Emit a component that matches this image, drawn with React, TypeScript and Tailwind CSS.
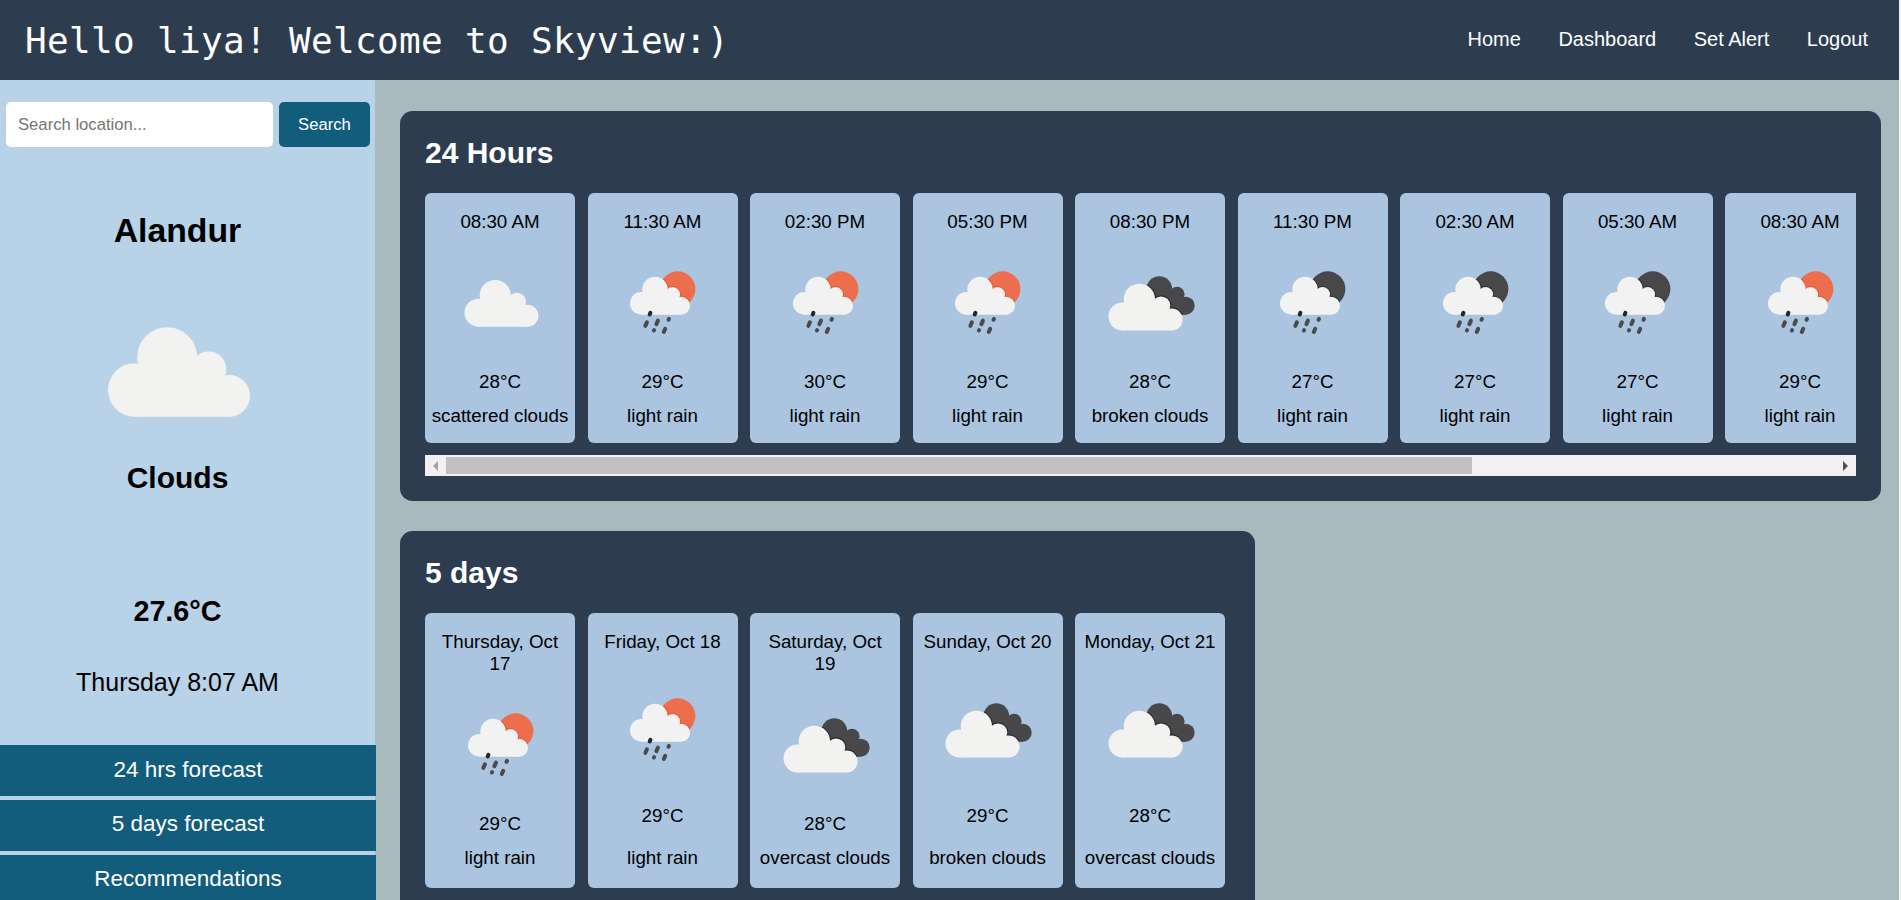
import React from "react";

type IconKind = "cloud" | "dayRain" | "nightRain" | "broken";

interface Forecast {
  label: string;
  icon: IconKind;
  temp: string;
  text: string;
}

const hours: Forecast[] = [
  { label: "08:30 AM", icon: "cloud", temp: "28°C", text: "scattered clouds" },
  { label: "11:30 AM", icon: "dayRain", temp: "29°C", text: "light rain" },
  { label: "02:30 PM", icon: "dayRain", temp: "30°C", text: "light rain" },
  { label: "05:30 PM", icon: "dayRain", temp: "29°C", text: "light rain" },
  { label: "08:30 PM", icon: "broken", temp: "28°C", text: "broken clouds" },
  { label: "11:30 PM", icon: "nightRain", temp: "27°C", text: "light rain" },
  { label: "02:30 AM", icon: "nightRain", temp: "27°C", text: "light rain" },
  { label: "05:30 AM", icon: "nightRain", temp: "27°C", text: "light rain" },
  { label: "08:30 AM", icon: "dayRain", temp: "29°C", text: "light rain" },
];

const days: Forecast[] = [
  { label: "Thursday, Oct 17", icon: "dayRain", temp: "29°C", text: "light rain" },
  { label: "Friday, Oct 18", icon: "dayRain", temp: "29°C", text: "light rain" },
  { label: "Saturday, Oct 19", icon: "broken", temp: "28°C", text: "overcast clouds" },
  { label: "Sunday, Oct 20", icon: "broken", temp: "29°C", text: "broken clouds" },
  { label: "Monday, Oct 21", icon: "broken", temp: "28°C", text: "overcast clouds" },
];

// Cloud silhouette, 426 x 269 units with its origin at the top left corner.
function CloudShape({ transform, fill, stroke }: { transform?: string; fill: string; stroke?: string }) {
  return (
    <g transform={transform} fill={fill} stroke={stroke} strokeWidth={stroke ? 14 : 0}>
      <circle cx="80.5" cy="188.5" r="80.5" />
      <circle cx="177.5" cy="90" r="90" />
      <circle cx="302" cy="126" r="53" />
      <circle cx="363" cy="206" r="63" />
      <path d="M80 269V189L177 90L302 126L363 206V269Z" />
    </g>
  );
}

function Rain({ disc, edge, id }: { disc: string; edge: string; id: string }) {
  return (
    <>
      <clipPath id={id}>
        <circle cx="77.7" cy="48" r="17.7" />
      </clipPath>
      <circle cx="77.7" cy="48" r="17.7" fill={disc} />
      <g clipPath={`url(#${id})`}>
        <CloudShape transform="translate(30 35.7) scale(.141)" fill={edge} stroke={edge} />
      </g>
      <CloudShape transform="translate(30 35.7) scale(.141)" fill="#f2f2f2" />
      <g stroke="#4a4a4c" strokeWidth="4" strokeLinecap="round">
        <path d="M50.4 71.9L49.7 73.5" stroke="#262626" />
        <path d="M46.9 81.4L45.4 84.8" />
        <path d="M57.9 79.7L56.4 83.1" />
        <path d="M69 77.9L68.5 78.8" />
        <path d="M54.1 89.2L53.9 89.5" />
        <path d="M65.2 87.8L63.8 91" />
      </g>
    </>
  );
}

function BrokenClouds() {
  return (
    <>
      <clipPath id="back-cloud" transform="translate(46 35.3) scale(.1425)">
        <circle cx="177.5" cy="90" r="90" />
        <circle cx="302" cy="126" r="53" />
        <circle cx="363" cy="206" r="63" />
        <path d="M80 269V189L177 90L302 126L363 206V269Z" />
      </clipPath>
      <CloudShape transform="translate(46 35.3) scale(.1425)" fill="#48484a" />
      <g clipPath="url(#back-cloud)">
        <CloudShape transform="translate(20.5 42.7) scale(.174)" fill="#2c2c2e" stroke="#2c2c2e" />
      </g>
      <CloudShape transform="translate(20.5 42.7) scale(.174)" fill="#f2f2f0" />
    </>
  );
}

function WeatherIcon({ kind }: { kind: IconKind }) {
  return (
    <svg viewBox="0 0 125 125" className="h-[125px] w-[125px] shrink-0">
      {kind === "cloud" && <CloudShape transform="translate(26.5 39) scale(.1735)" fill="#f2f2f0" />}
      {kind === "dayRain" && <Rain disc="#ed6e4c" edge="#e8542f" id="sun-disc" />}
      {kind === "nightRain" && <Rain disc="#48484a" edge="#2f2f31" id="moon-disc" />}
      {kind === "broken" && <BrokenClouds />}
    </svg>
  );
}

function Card({ item, className }: { item: Forecast; className: string }) {
  return (
    <div
      className={`flex w-[150px] shrink-0 flex-col items-center justify-between rounded-[6px] bg-[#abc5e0] px-[6px] pt-[18px] text-center text-[18.75px] leading-[22px] text-black ${className}`}
    >
      <p className="mb-2">{item.label}</p>
      <WeatherIcon kind={item.icon} />
      <p className="mt-[4.5px] mb-[12.5px]">{item.temp}</p>
      <p className="whitespace-nowrap">{item.text}</p>
    </div>
  );
}

function Scrollbar() {
  return (
    <div className="mt-3 flex h-[21px] items-center bg-[#f1f1f1]">
      <div className="flex w-[21px] justify-center">
        <svg viewBox="0 0 5 10" className="h-[10px] w-[5px]">
          <path d="M5 0V10L0 5Z" fill="#a3a3a3" />
        </svg>
      </div>
      <div className="h-[17px] w-[1026px] bg-[#c1c1c1]" />
      <div className="ml-auto flex w-[21px] justify-center">
        <svg viewBox="0 0 5 10" className="h-[10px] w-[5px]">
          <path d="M0 0V10L5 5Z" fill="#505050" />
        </svg>
      </div>
    </div>
  );
}

export default function App() {
  return (
    <div className="h-[900px] w-full overflow-hidden bg-[#f0f0f0] pr-[2px] font-['Liberation_Sans',Arial,sans-serif]">
      <div className="flex h-full flex-col bg-[#a8babd]">
        <header className="flex h-20 shrink-0 items-center justify-between bg-[#2d3d4f] pr-[31px] pl-[25px] text-white">
          <h1 className="pt-[2px] font-['DejaVu_Sans_Mono',monospace] text-[36px] leading-[46px] tracking-[0.33px] whitespace-nowrap">
            Hello liya! Welcome to Skyview:)
          </h1>
          <nav className="flex gap-[37.5px] pb-[2px] text-[20px] leading-[23px]">
            <a>Home</a>
            <a>Dashboard</a>
            <a>Set Alert</a>
            <a>Logout</a>
          </nav>
        </header>

        <div className="flex min-h-0 flex-1">
          <aside className="flex w-[375px] shrink-0 flex-col bg-[#b8d2e8] text-black">
            <div className="mt-[22px] flex h-[45px] shrink-0 gap-[6px] pr-[5px] pl-[6px] text-[16.67px]">
              <input
                placeholder="Search location..."
                className="w-[267px] rounded-[5px] bg-white px-[12px] pt-[1px] placeholder:text-[#757575]"
              />
              <button className="flex-1 rounded-[5px] bg-[#125c7c] text-white">Search</button>
            </div>

            <div className="mt-[63px] flex w-[355px] shrink-0 flex-col items-center">
              <h2 className="text-[33.75px] leading-10 font-bold">Alandur</h2>
              <svg viewBox="0 0 426 269" className="mt-[77px] ml-[3px] h-[90px] w-[142px]">
                <CloudShape fill="#f2f2f0" />
              </svg>
              <h3 className="mt-[44px] text-[30px] leading-[34px] font-bold">Clouds</h3>
              <p className="mt-[99px] text-[28.75px] leading-[34px] font-bold">27.6°C</p>
              <p className="mt-[40px] text-[25px] leading-[29px]">Thursday 8:07 AM</p>
            </div>

            <div className="mt-[48px] flex w-[376px] flex-col gap-1 text-[22.5px] text-white">
              <button className="h-[51px] shrink-0 bg-[#125c7c] pb-[2px]">24 hrs forecast</button>
              <button className="h-[51px] shrink-0 bg-[#125c7c] pb-[4px]">5 days forecast</button>
              <button className="h-[51px] shrink-0 bg-[#125c7c] pb-[4px]">Recommendations</button>
            </div>
          </aside>

          <main className="flex min-w-0 flex-1 flex-col items-start gap-[30px] pt-[31px] pr-[18px] pl-[25px]">
            <section className="h-[390px] w-full shrink-0 rounded-[12.5px] bg-[#2d3d4f] p-[25px]">
              <h2 className="mb-[24px] text-[30px] leading-[33px] font-bold text-white">24 Hours</h2>
              <div className="flex gap-[12.5px] overflow-hidden">
                {hours.map((item, i) => (
                  <Card key={i} item={item} className="h-[250px] pb-4" />
                ))}
              </div>
              <Scrollbar />
            </section>

            <section className="h-[400px] w-[855px] shrink-0 rounded-[12.5px] bg-[#2d3d4f] p-[25px]">
              <h2 className="mb-[24px] text-[30px] leading-[33px] font-bold text-white">5 days</h2>
              <div className="flex gap-[12.5px]">
                {days.map((item, i) => (
                  <Card key={i} item={item} className="h-[275px] pb-[19px]" />
                ))}
              </div>
            </section>
          </main>
        </div>
      </div>
    </div>
  );
}
